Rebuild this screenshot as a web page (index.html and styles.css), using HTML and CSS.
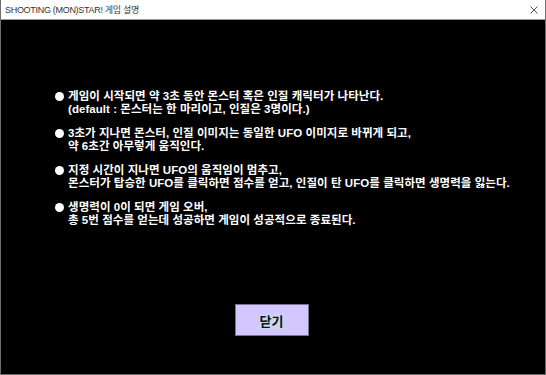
FILE: index.html
```html
<html>
    <head>
        <link rel="stylesheet" href="styles.css">
    </head>
<body>
    <div class="window">
        <div class="titleBar">
            <span class="titleText">SHOOTING (MON)STAR! 게임 설명</span>
            <span class="closeBtn">
                <svg width="8" height="8" viewBox="0 0 8 8">
                    <path d="M0.5 0.5 L7.5 7.5 M7.5 0.5 L0.5 7.5" stroke="#555" stroke-width="1" fill="none"/>
                </svg>
            </span>
        </div>

        <div class="content">
            <ul class="ruleList">
                <li>게임이 시작되면 약 3초 동안 몬스터 혹은 인질 캐릭터가 나타난다.<br>(default : 몬스터는 한 마리이고, 인질은 3명이다.)</li>
                <li>3초가 지나면 몬스터, 인질 이미지는 동일한 UFO 이미지로 바뀌게 되고,<br>약 6초간 아무렇게 움직인다.</li>
                <li>지정 시간이 지나면 UFO의 움직임이 멈추고,<br>몬스터가 탑승한 UFO를 클릭하면 점수를 얻고, 인질이 탄 UFO를 클릭하면 생명력을 잃는다.</li>
                <li>생명력이 0이 되면 게임 오버,<br>총 5번 점수를 얻는데 성공하면 게임이 성공적으로 종료된다.</li>
            </ul>

            <div class="btnRow">
                <button class="closeDialogBtn"><span>닫기</span></button>
            </div>
        </div>
    </div>
</body>
</html>
```

FILE: styles.css
```css
* {
    box-sizing: border-box;
}
body {
    margin: 0;
    background: #000;
}

.window {
    width: 546px;
    height: 375px;
    border: 1px solid #6d6d6d;
    border-top: none;
    display: flex;
    flex-direction: column;
}

.titleBar {
    height: 20px;
    background: #fff;
    border-bottom: 1px solid #9a9a9a;
    display: flex;
    align-items: center;
    justify-content: space-between;
    padding: 0 6px 0 4px;
}
.titleText {
    font-family: "Liberation Sans", "Noto Sans CJK KR", sans-serif;
    font-size: 9px;
    color: #333;
    letter-spacing: -0.3px;
}
.closeBtn {
    display: flex;
    width: 10px;
    height: 10px;
    align-items: center;
    justify-content: center;
}

.content {
    flex: 1;
    background: #000;
    display: flex;
    flex-direction: column;
}

.ruleList {
    list-style: none;
    margin: 0;
    padding: 70px 0 0 54px;
    color: #fff;
    font-family: "Liberation Sans", "Noto Sans CJK KR", sans-serif;
    font-weight: bold;
    font-size: 11.5px;
    letter-spacing: 0.05px;
    line-height: 13px;
}
.ruleList li {
    position: relative;
    padding-left: 13px;
    margin-bottom: 11px;
}
.ruleList li::before {
    content: "";
    position: absolute;
    left: 0;
    top: 2px;
    width: 9px;
    height: 9px;
    border-radius: 50%;
    background: #fff;
}

.btnRow {
    display: flex;
    justify-content: center;
    margin-top: 66px;
    padding-right: 3px;
}
.closeDialogBtn {
    width: 74px;
    height: 32px;
    background: #d2c8ff;
    border: 1px solid #77738e;
    font-family: "Liberation Sans", "Noto Sans CJK KR", sans-serif;
    font-weight: bold;
    font-size: 13px;
    color: #111;
    padding: 0;
}
.closeDialogBtn span {
    background: #c8d6f4;
    padding: 0 1px;
}
```
